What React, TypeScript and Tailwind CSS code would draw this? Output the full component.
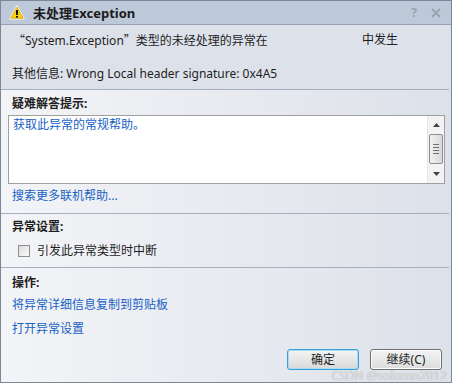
import React from "react";

const font = { fontFamily: '"Noto Sans", "Noto Sans CJK SC", sans-serif' };
const cjk = { fontFamily: '"Noto Sans CJK SC", sans-serif' };

function WarnIcon() {
  return (
    <svg width="16" height="15" viewBox="0 0 16 15">
      <path d="M8 0.8 L15.3 14 L0.7 14 Z" fill="#ffffff" stroke="#ffffff" strokeWidth="1" strokeLinejoin="round" />
      <path d="M8 2 L14.3 13.3 L1.7 13.3 Z" fill="#f7cf14" stroke="#d8a400" strokeWidth="0.8" strokeLinejoin="round" />
      <rect x="7" y="5" width="2" height="5" fill="#111" />
      <rect x="7" y="11" width="2" height="1.6" fill="#111" />
    </svg>
  );
}

function Scrollbar() {
  return (
    <div className="w-[17px] h-full bg-[#f3f3f3] border-l border-[#e6e6e6] flex flex-col items-center">
      <div className="h-[17px] flex items-center justify-center">
        <svg width="7" height="4" viewBox="0 0 7 4"><path d="M3.5 0 L7 4 L0 4 Z" fill="#444" /></svg>
      </div>
      <div className="mt-[1px] w-[14px] h-[30px] rounded-[2px] border border-[#8f8f8f] bg-gradient-to-r from-[#f2f2f2] to-[#d8d8d8] flex flex-col items-center justify-center gap-[2px]">
        <div className="w-[6px] h-px bg-[#6f6f6f]" />
        <div className="w-[6px] h-px bg-[#6f6f6f]" />
        <div className="w-[6px] h-px bg-[#6f6f6f]" />
        <div className="w-[6px] h-px bg-[#6f6f6f]" />
      </div>
      <div className="flex-1 flex items-center justify-center">
        <svg width="7" height="4" viewBox="0 0 7 4"><path d="M0 0 L7 0 L3.5 4 Z" fill="#444" /></svg>
      </div>
    </div>
  );
}

export default function App() {
  return (
    <div
      className="relative w-[452px] h-[383px] border border-[#7e8794] flex flex-col text-[12px] leading-[16px] text-[#1e1e1e] overflow-hidden"
      style={font}
    >
      {/* title bar */}
      <div className="h-[24px] shrink-0 bg-[#bdc8d9] border-b border-[#97a3b4] flex items-center pl-[8px] pr-[6px]">
        <WarnIcon />
        <div className="ml-[8px] text-[13px] font-bold text-[#1b1b1b]">未处理Exception</div>
        <div className="flex-1" />
        <div className="text-[12px] text-[#9aa2ad] font-bold mr-[14px]">?</div>
        <svg width="10" height="10" viewBox="0 0 10 10" className="mr-[4px]">
          <path d="M1 1 L9 9 M9 1 L1 9" stroke="#9aa2ad" strokeWidth="1.8" />
        </svg>
      </div>

      {/* header */}
      <div className="h-[64px] shrink-0 bg-[#dde2ea] pt-[7px] pl-[12px]">
        <div className="flex">
          <span className="w-[349px]">
            <span style={cjk}>“</span>System.Exception<span style={cjk}>”</span>类型的未经处理的异常在
          </span>
          <span>中发生</span>
        </div>
        <div className="mt-[17px] -ml-px">其他信息: Wrong Local header signature: 0x4A5</div>
      </div>

      {/* body */}
      <div className="flex-1 flex flex-col bg-gradient-to-r from-[#f3f4f7] to-[#dde1e9]">
        <div className="h-px bg-[#a5afbd] mr-[2px]" />
        <div className="mt-[6px] ml-[11px] font-bold">疑难解答提示:</div>
        <div className="mt-[3px] ml-[7px] mr-[6px] h-[69px] border border-[#a0a0a0] bg-white flex">
          <div className="flex-1 pl-[4px] pt-[1px] text-[#1862c4]">获取此异常的常规帮助。</div>
          <Scrollbar />
        </div>
        <div className="mt-[4px] ml-[11px] text-[#1862c4]">搜索更多联机帮助...</div>
        <div className="mt-[9px] h-px bg-[#a5afbd] mr-[2px]" />
        <div className="mt-[5px] ml-[11px] font-bold">异常设置:</div>
        <div className="mt-[8px] ml-[17px] flex items-center h-[16px]">
          <div className="w-[12px] h-[12px] border border-[#8e8f8f] bg-gradient-to-br from-[#dcdcdc] to-[#fbfbfb]" />
          <span className="ml-[7px]">引发此异常类型时中断</span>
        </div>
        <div className="mt-[8px] h-px bg-[#a5afbd] mr-[2px]" />
        <div className="mt-[7px] ml-[11px] font-bold">操作:</div>
        <div className="mt-[6px] ml-[11px] text-[#1862c4]">将异常详细信息复制到剪贴板</div>
        <div className="mt-[8px] ml-[11px] text-[#1862c4]">打开异常设置</div>
        <div className="mt-[12px] flex justify-end gap-[11px] mr-[9px]">
          <div className="w-[72px] h-[21px] rounded-[3px] border border-[#3c9fd8] bg-gradient-to-b from-[#f4f4f4] to-[#d9d9d9] flex items-center justify-center shadow-[inset_0_0_0_1px_#a6dcf5]">
            确定
          </div>
          <div className="w-[72px] h-[21px] rounded-[3px] border border-[#707070] bg-gradient-to-b from-[#f4f4f4] to-[#dcdcdc] flex items-center justify-center shadow-[inset_0_0_0_1px_#fcfcfc]">
            继续(C)
          </div>
        </div>
      </div>

      {/* watermark overlay */}
      <div className="absolute right-[4px] bottom-0 text-[12px] leading-[13px] text-[#e6e6e6] [text-shadow:0_0_1px_#8a8a8a] opacity-90">
        CSDN @solomn2012
      </div>
    </div>
  );
}
